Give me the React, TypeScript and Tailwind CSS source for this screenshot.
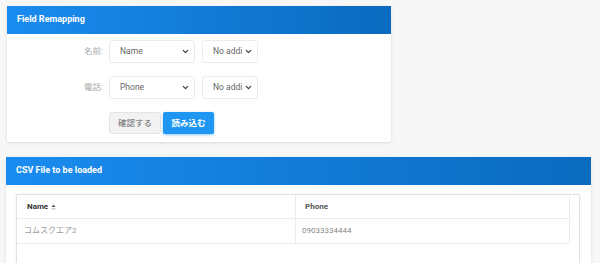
import { ChevronDown } from "lucide-react";

const font = { fontFamily: "Roboto, 'Noto Sans CJK JP', sans-serif" };

function Select({ value, width }: { value: string; width: string }) {
  return (
    <div
      className={`${width} h-[23px] bg-white border border-[#ececec] rounded-[3px] flex items-center justify-between pl-[10px] pr-[4px] text-[8.5px] text-[#666]`}
    >
      <span className="overflow-hidden whitespace-nowrap">{value}</span>
      <ChevronDown className="w-[9px] h-[9px] text-[#333] shrink-0 ml-[2px]" strokeWidth={3} aria-hidden="true" />
    </div>
  );
}

function CardHeader({ title }: { title: string }) {
  return (
    <div className="h-[28px] flex items-center px-[10px] bg-gradient-to-r from-[#1a8cf0] to-[#0a6bbf] text-white text-[9px] font-bold">
      {title}
    </div>
  );
}

export default function App() {
  const rows = [
    { label: "名前:", value: "Name" },
    { label: "電話:", value: "Phone" },
  ];

  return (
    <div className="w-[600px] h-[263px] bg-[#f7f7f7] overflow-hidden" style={font}>
      <div className="pt-[6px] pl-[7px]">
        <div className="w-[384px] bg-white rounded-[2px] shadow-[0_1px_3px_rgba(0,0,0,0.12)]">
          <CardHeader title="Field Remapping" />
          <div className="pt-[6px] pb-[8px]">
            <div className="flex flex-col gap-[13px]">
              {rows.map((r) => (
                <div key={r.label} className="flex items-center">
                  <div className="w-[102px] text-right text-[8.5px] text-[#aaa] pr-[6px]">{r.label}</div>
                  <Select value={r.value} width="w-[86px]" />
                  <div className="w-[7px]" />
                  <Select value="No additional" width="w-[56px]" />
                </div>
              ))}
            </div>
            <div className="flex items-center gap-[2px] pl-[102px] mt-[13px]">
              <button className="w-[52px] h-[22px] bg-[#f2f2f2] border border-[#e4e4e4] rounded-[3px] text-[8.5px] text-[#666]">
                確認する
              </button>
              <button className="w-[51px] h-[22px] bg-[#1f97f2] rounded-[2px] text-[8.5px] font-bold text-white shadow-[0_1px_3px_rgba(31,151,242,0.5)]">
                読み込む
              </button>
            </div>
          </div>
        </div>
      </div>

      <div className="pt-[15px] pl-[6px]">
        <div className="w-[585px] h-[120px] bg-white rounded-[2px] shadow-[0_1px_3px_rgba(0,0,0,0.12)]">
          <CardHeader title="CSV File to be loaded" />
          <div className="px-[10px] pt-[9px]">
            <div className="w-[564px] h-[80px] border border-[#e2e2e2] rounded-[2px] shadow-[0_0_2px_rgba(0,0,0,0.08)] bg-white">
              <div className="w-[553px] border-r border-[#e6edf3]">
                <div className="flex h-[24px] border-b border-[#e6edf3]">
                  <div className="w-[279px] border-r border-[#e6edf3] flex items-center pl-[10px] text-[8px] font-bold text-[#333]">
                    Name
                    <svg className="ml-[3px]" width="5" height="6" viewBox="0 0 5 6" aria-hidden="true">
                      <path d="M0.5 3 L2.5 0.5 L4.5 3 Z" fill="#555" />
                      <rect x="0.5" y="4.5" width="4" height="0.8" fill="#999" />
                    </svg>
                  </div>
                  <div className="flex-1 flex items-center pl-[9px] text-[8px] font-bold text-[#555]">Phone</div>
                </div>
                <div className="flex h-[25px] border-b border-[#e6edf3]">
                  <div className="w-[279px] border-r border-[#e6edf3] flex items-center pl-[7px] text-[8px] text-[#999]">
                    コムスクエア2
                  </div>
                  <div className="flex-1 pt-[6px] pl-[6px] text-[8px] text-[#888]">09033334444</div>
                </div>
              </div>
            </div>
          </div>
        </div>
      </div>
    </div>
  );
}
